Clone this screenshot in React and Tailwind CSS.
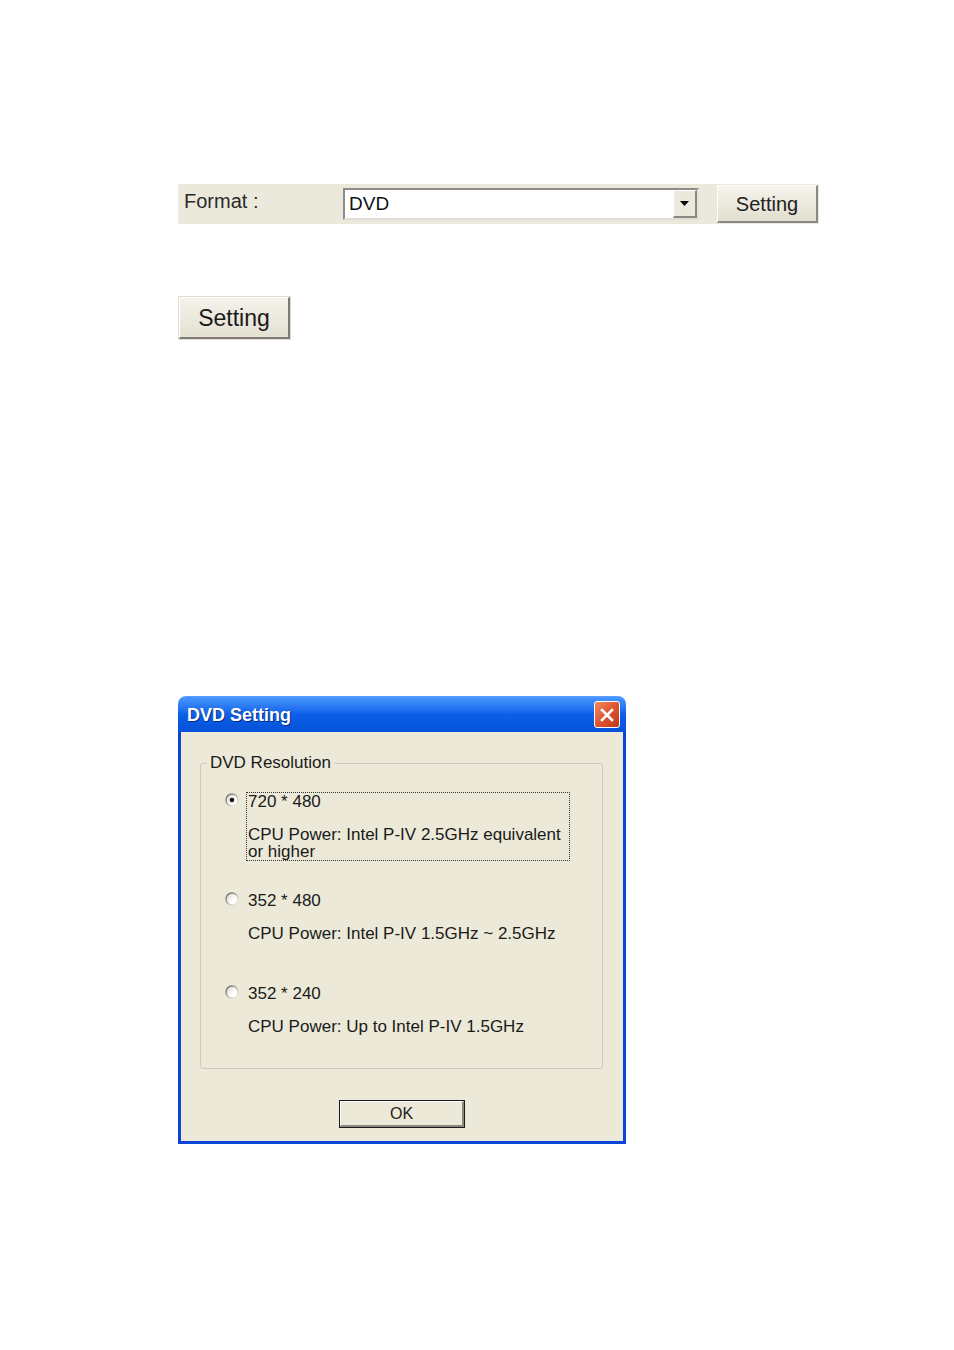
import React from "react";

function Radio({ checked, id }) {
  return (
    <svg width="14" height="14" viewBox="0 0 14 14" className="shrink-0">
      <defs>
        <linearGradient id={`f${id}`} x1="0" y1="0" x2="1" y2="1">
          <stop offset="0" stopColor="#d2d0c6" />
          <stop offset="0.6" stopColor="#ffffff" />
          <stop offset="1" stopColor="#ffffff" />
        </linearGradient>
        <linearGradient id={`s${id}`} x1="0" y1="0" x2="1" y2="1">
          <stop offset="0" stopColor="#5f5f58" />
          <stop offset="0.55" stopColor="#bdbbb0" />
          <stop offset="1" stopColor="#fbfbf8" />
        </linearGradient>
      </defs>
      <circle cx="7" cy="7" r="6" fill={`url(#f${id})`} stroke={`url(#s${id})`} strokeWidth="1.5" />
      {checked && <circle cx="7" cy="7" r="2.3" fill="#111" />}
    </svg>
  );
}

export default function App() {
  const font = { fontFamily: '"Liberation Sans", Arial, sans-serif' };
  return (
    <div className="w-[954px] h-[1350px] bg-white overflow-hidden" style={font}>
      <div className="pl-[178px] pt-[184px] flex flex-col items-start">
        {/* Format strip */}
        <div className="w-[641px] h-[40px] bg-[#ebe9dc] flex items-center">
          <div className="w-[165px] pl-[6px] text-[20px] leading-[24px] text-[#2a2a2a] -mt-[6px]">Format :</div>
          <div className="w-[356px] h-[32px] bg-white border-t-2 border-l-2 border-t-[#8c8c88] border-l-[#8c8c88] border-b-2 border-r-2 border-b-[#e2e0d6] border-r-[#e2e0d6] flex items-center">
            <div className="flex-1 pl-[4px] text-[19px] leading-[22px] text-[#111]">DVD</div>
            <div className="w-[24px] h-[28px] bg-[#ece9dc] border-t border-l border-t-white border-l-white border-b-2 border-r-2 border-b-[#8a8880] border-r-[#8a8880] flex items-center justify-center">
              <svg width="9" height="5" viewBox="0 0 9 5">
                <path d="M0 0 H9 L4.5 5 Z" fill="#000" />
              </svg>
            </div>
          </div>
          <div className="ml-[18px] w-[101px] h-[38px] bg-gradient-to-b from-[#f6f4ec] to-[#e2dfd0] border-t border-l border-t-white border-l-white border-b-2 border-r-2 border-b-[#8a8880] border-r-[#8a8880] flex items-center justify-center text-[20px] leading-[24px] text-[#222]">
            Setting
          </div>
        </div>

        {/* Standalone Setting button */}
        <div className="mt-[72px] w-[113px] h-[44px] border border-[#dedbd0] bg-[#ece9dc]">
          <div className="w-full h-full bg-gradient-to-b from-[#f4f2ea] to-[#e4e1d3] border-t border-l border-t-white border-l-white border-b-2 border-r-2 border-b-[#7c7a72] border-r-[#7c7a72] flex items-center justify-center text-[23px] leading-[26px] text-[#1a1a1a]">
            Setting
          </div>
        </div>

        {/* Dialog */}
        <div className="mt-[356px] w-[448px] flex flex-col">
          <div className="h-[36px] rounded-t-[8px] bg-gradient-to-b from-[#4a97ff] via-[#0b5fe8] to-[#0552d8] flex items-center justify-between pl-[9px] pr-[6px] border-t border-t-[#5aa0ff]">
            <div
              className="text-white font-bold text-[18px] leading-[22px]"
              style={{ textShadow: "1px 1px 0 #0a2a80" }}
            >
              DVD Setting
            </div>
            <div className="w-[26px] h-[27px] rounded-[3px] border border-white bg-gradient-to-br from-[#f08a62] via-[#de5430] to-[#c1381a] flex items-center justify-center">
              <svg width="14" height="14" viewBox="0 0 14 14">
                <path d="M2 2 L12 12 M12 2 L2 12" stroke="#fff" strokeWidth="2.6" strokeLinecap="square" />
              </svg>
            </div>
          </div>
          <div className="bg-[#ece9d8] border-l-[3px] border-r-[3px] border-b-[3px] border-[#0a45d8] flex flex-col pt-[21px] pb-[13px]">
            <fieldset className="ml-[19px] mr-[20px] border border-[#cdcabb] rounded-[3px] pb-[33px] text-[17px] leading-[17px] text-[#1a1a1a]">
              <legend className="ml-[6px] px-[3px] text-[17px] leading-[20px] text-[#1a1a1a]">DVD Resolution</legend>

              <div className="pl-[24px] flex flex-col">
                <div className="mt-[19px] flex items-start">
                  <div className="mt-[1px]"><Radio checked id="a" /></div>
                  <div className="ml-[7px] w-[324px] h-[69px] border border-dotted border-[#333] pl-[1px]">
                    <div>720 * 480</div>
                    <div className="mt-[16px]">CPU Power: Intel P-IV 2.5GHz equivalent<br />or higher</div>
                  </div>
                </div>

                <div className="mt-[31px] flex items-start">
                  <div><Radio id="b" /></div>
                  <div className="ml-[8px] pl-[1px]">
                    <div>352 * 480</div>
                    <div className="mt-[16px]">CPU Power: Intel P-IV 1.5GHz ~ 2.5GHz</div>
                  </div>
                </div>

                <div className="mt-[43px] flex items-start">
                  <div><Radio id="c" /></div>
                  <div className="ml-[8px] pl-[1px]">
                    <div>352 * 240</div>
                    <div className="mt-[16px]">CPU Power: Up to Intel P-IV 1.5GHz</div>
                  </div>
                </div>
              </div>
            </fieldset>

            <div className="mt-[31px] flex justify-center">
              <div className="w-[126px] h-[28px] border border-[#1a1a1a] bg-[#ece9d8]">
                <div className="w-full h-full border-t border-l border-t-white border-l-white border-b-2 border-r-2 border-b-[#8a8880] border-r-[#8a8880] flex items-center justify-center text-[16px] leading-[18px] text-[#222]">
                  OK
                </div>
              </div>
            </div>
          </div>
        </div>
      </div>
    </div>
  );
}
